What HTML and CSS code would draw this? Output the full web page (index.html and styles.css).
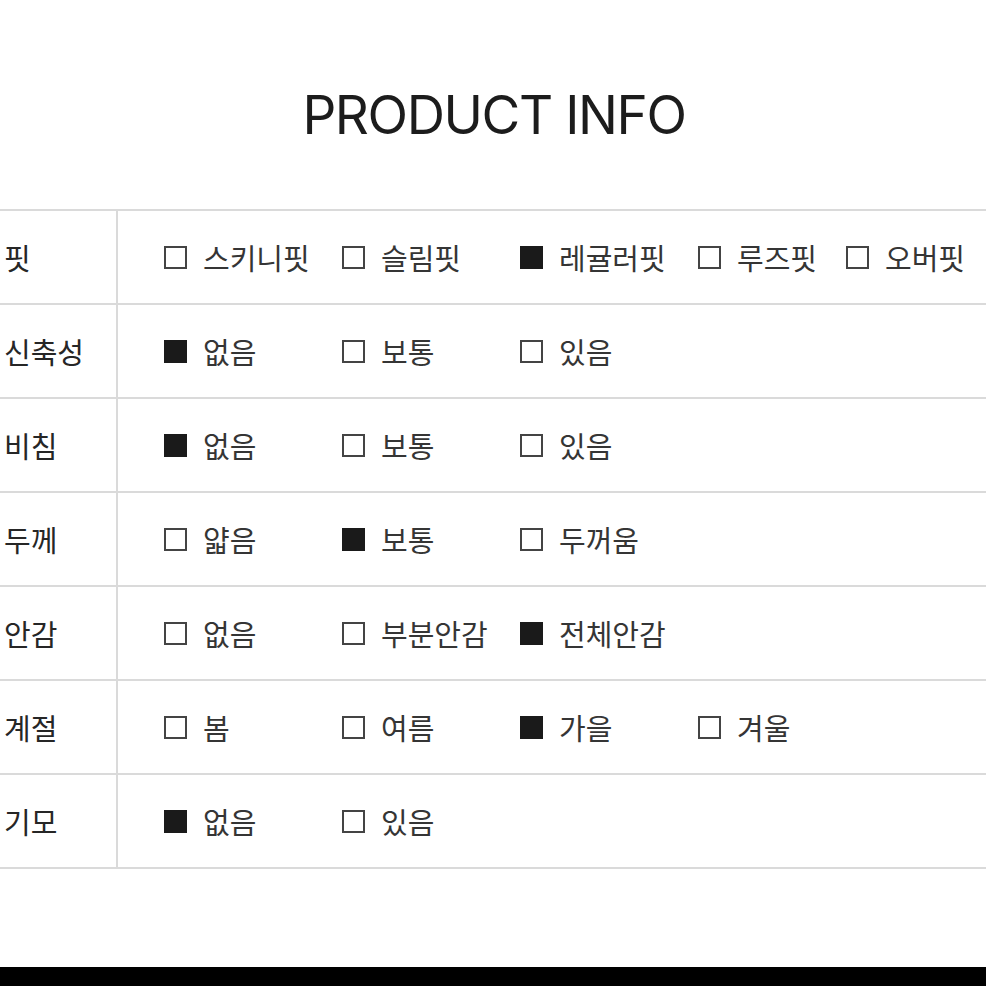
FILE: index.html
```html
<!DOCTYPE html>
<html lang="ko">
<head>
<meta charset="utf-8">
<link rel="stylesheet" href="styles.css">
</head>
<body>
<div class="page">
  <header class="head"><h1 class="title">PRODUCT INFO</h1></header>
  <div class="table">
    <div class="row">
      <div class="label">핏</div>
      <div class="opts">
        <span class="opt"><i class="box"></i>스키니핏</span>
        <span class="opt"><i class="box"></i>슬림핏</span>
        <span class="opt"><i class="box on"></i>레귤러핏</span>
        <span class="opt narrow"><i class="box"></i>루즈핏</span>
        <span class="opt"><i class="box"></i>오버핏</span>
      </div>
    </div>
    <div class="row">
      <div class="label">신축성</div>
      <div class="opts">
        <span class="opt"><i class="box on"></i>없음</span>
        <span class="opt"><i class="box"></i>보통</span>
        <span class="opt"><i class="box"></i>있음</span>
      </div>
    </div>
    <div class="row">
      <div class="label">비침</div>
      <div class="opts">
        <span class="opt"><i class="box on"></i>없음</span>
        <span class="opt"><i class="box"></i>보통</span>
        <span class="opt"><i class="box"></i>있음</span>
      </div>
    </div>
    <div class="row">
      <div class="label">두께</div>
      <div class="opts">
        <span class="opt"><i class="box"></i>얇음</span>
        <span class="opt"><i class="box on"></i>보통</span>
        <span class="opt"><i class="box"></i>두꺼움</span>
      </div>
    </div>
    <div class="row">
      <div class="label">안감</div>
      <div class="opts">
        <span class="opt"><i class="box"></i>없음</span>
        <span class="opt"><i class="box"></i>부분안감</span>
        <span class="opt"><i class="box on"></i>전체안감</span>
      </div>
    </div>
    <div class="row">
      <div class="label">계절</div>
      <div class="opts">
        <span class="opt"><i class="box"></i>봄</span>
        <span class="opt"><i class="box"></i>여름</span>
        <span class="opt"><i class="box on"></i>가을</span>
        <span class="opt"><i class="box"></i>겨울</span>
      </div>
    </div>
    <div class="row">
      <div class="label">기모</div>
      <div class="opts">
        <span class="opt"><i class="box on"></i>없음</span>
        <span class="opt"><i class="box"></i>있음</span>
      </div>
    </div>
  </div>
  <div class="spacer"></div>
  <footer class="bar"></footer>
</div>
</body>
</html>
```
FILE: styles.css
```css
html, body {
  margin: 0;
  padding: 0;
  background: #fff;
}
.page {
  width: 986px;
  height: 986px;
  display: flex;
  flex-direction: column;
  overflow: hidden;
  font-family: "Noto Sans CJK KR", "Noto Sans", sans-serif;
  color: #333;
}
.head {
  height: 209px;
  display: flex;
  align-items: center;
  justify-content: center;
}
.title {
  margin: 0;
  font-family: Inter, "Noto Sans", sans-serif;
  font-weight: 400;
  font-size: 53px;
  letter-spacing: -1.4px;
  color: #1c1c1c;
  padding-top: 20px;
  padding-left: 2px;
}
.table {
  border-top: 2px solid #dadada;
}
.row {
  display: grid;
  grid-template-columns: 118px 1fr;
  height: 92px;
  border-bottom: 2px solid #dadada;
}
.label {
  border-right: 2px solid #dadada;
  display: flex;
  align-items: center;
  padding-left: 4px;
  font-size: 29px;
  color: #262626;
  font-weight: 400;
}
.opts {
  display: flex;
  align-items: center;
  padding-left: 46px;
}
.opt {
  width: 178px;
  flex: none;
  display: flex;
  align-items: center;
  gap: 16px;
  font-size: 29px;
  color: #353535;
  white-space: nowrap;
}
.opt.narrow {
  width: 148px;
}
.box {
  width: 19px;
  height: 19px;
  border: 2px solid #444;
  flex: none;
  margin-top: 1px;
}
.box.on {
  background: #1a1a1a;
  border-color: #1a1a1a;
}
.spacer {
  flex: 1;
}
.bar {
  height: 19px;
  background: #000;
}
```
